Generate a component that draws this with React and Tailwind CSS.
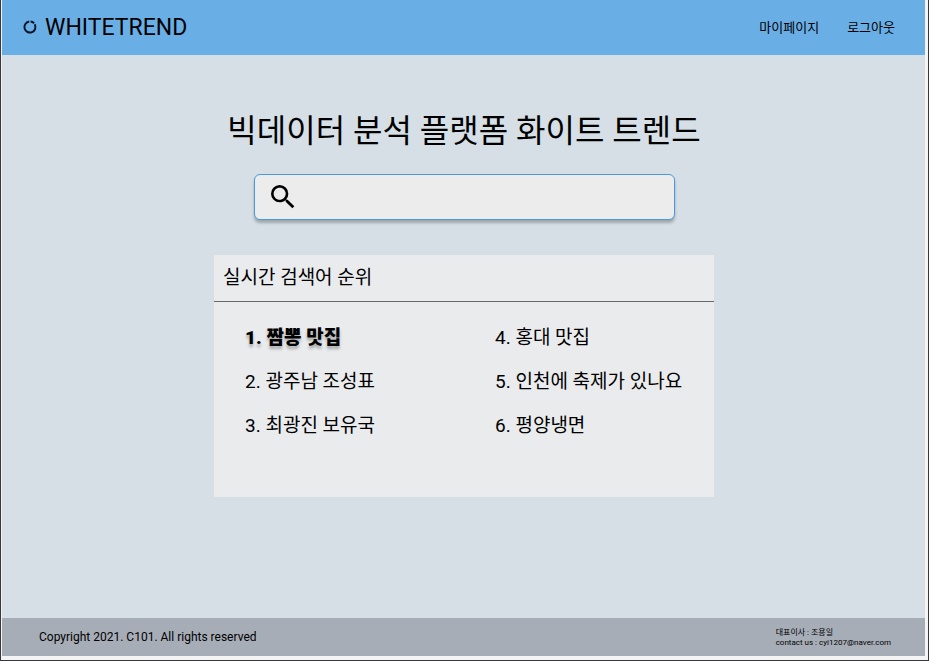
const leftRanks = ["짬뽕 맛집", "광주남 조성표", "최광진 보유국"];
const rightRanks = ["홍대 맛집", "인천에 축제가 있나요", "평양냉면"];

function RankList({ items, start }) {
  return (
    <ol className="flex flex-col gap-4 pl-[31px]" start={start}>
      {items.map((item, i) => {
        const rank = start + i;
        return (
          <li
            key={item}
            className={
              rank === 1
                ? "font-black whitespace-nowrap [text-shadow:0_3px_3px_rgba(0,0,0,0.3)]"
                : "whitespace-nowrap"
            }
          >
            {rank}. {item}
          </li>
        );
      })}
    </ol>
  );
}

export default function App() {
  return (
    <div className="flex min-h-screen flex-col border border-t-0 border-[#38383c] bg-[#f4f4f4] pr-[3px] pb-1 pl-px font-[Roboto,'Noto_Sans_CJK_KR',sans-serif] text-black">
      <header className="flex h-[55px] items-center justify-between bg-[#6aaee6] pr-[30px] pl-5">
        <a href="#" className="flex items-center gap-[7px] text-[23px] leading-8">
          <svg viewBox="0 0 16 16" className="size-4" fill="none" stroke="#06142a" strokeWidth="2" aria-hidden="true">
            <path d="M8.6 1.6A5.5 5.5 0 0 1 12.1 3.3M12.7 4.3A5.5 5.5 0 1 1 7.2 1.6" />
          </svg>
          WHITETREND
        </a>
        <nav className="flex gap-7 text-[13px]">
          <a href="#">마이페이지</a>
          <a href="#">로그아웃</a>
        </nav>
      </header>

      <main className="flex flex-1 flex-col items-center bg-[#d5dfe5] pt-13 pl-px">
        <h1 className="text-[32px] leading-12">빅데이터 분석 플랫폼 화이트 트렌드</h1>

        <form
          role="search"
          className="mt-[19px] flex h-[46px] w-full max-w-[421px] items-center gap-3 rounded-md border border-[#4a98e2] bg-[#ececec] px-3 pb-px shadow-[0_3px_3px_rgba(0,0,0,0.25)]"
          onSubmit={(e) => e.preventDefault()}
        >
          <button type="submit" aria-label="검색">
            <svg viewBox="0 0 24 24" className="size-8" fill="currentColor" aria-hidden="true">
              <path d="M15.5 14h-.79l-.28-.27A6.471 6.471 0 0 0 16 9.5 6.5 6.5 0 1 0 9.5 16c1.61 0 3.09-.59 4.23-1.57l.27.28v.79l5 4.99L20.49 19l-4.99-5zm-6 0C7.01 14 5 11.99 5 9.5S7.01 5 9.5 5 14 7.01 14 9.5 11.99 14 9.5 14z" />
            </svg>
          </button>
          <input type="search" aria-label="검색어" className="min-w-0 flex-1 bg-transparent text-lg outline-none" />
        </form>

        <section className="mt-[35px] w-full max-w-[500px] bg-[#eaebed] pb-[57px] text-[19px] leading-7">
          <h2 className="border-b border-[#66686a] px-[9px] py-[9px]">실시간 검색어 순위</h2>
          <div className="grid grid-cols-2 pt-[22px]">
            <RankList items={leftRanks} start={1} />
            <RankList items={rightRanks} start={4} />
          </div>
        </section>
      </main>

      <footer className="flex h-[38px] items-center justify-between bg-[#a7adb7] pr-[34px] pl-[37px] text-xs">
        <p>Copyright 2021. C101. All rights reserved</p>
        <address className="pt-0.5 text-[8px] leading-[10px] not-italic">
          대표이사 : 조용일
          <br />
          contact us : cyi1207@naver.com
        </address>
      </footer>
    </div>
  );
}
